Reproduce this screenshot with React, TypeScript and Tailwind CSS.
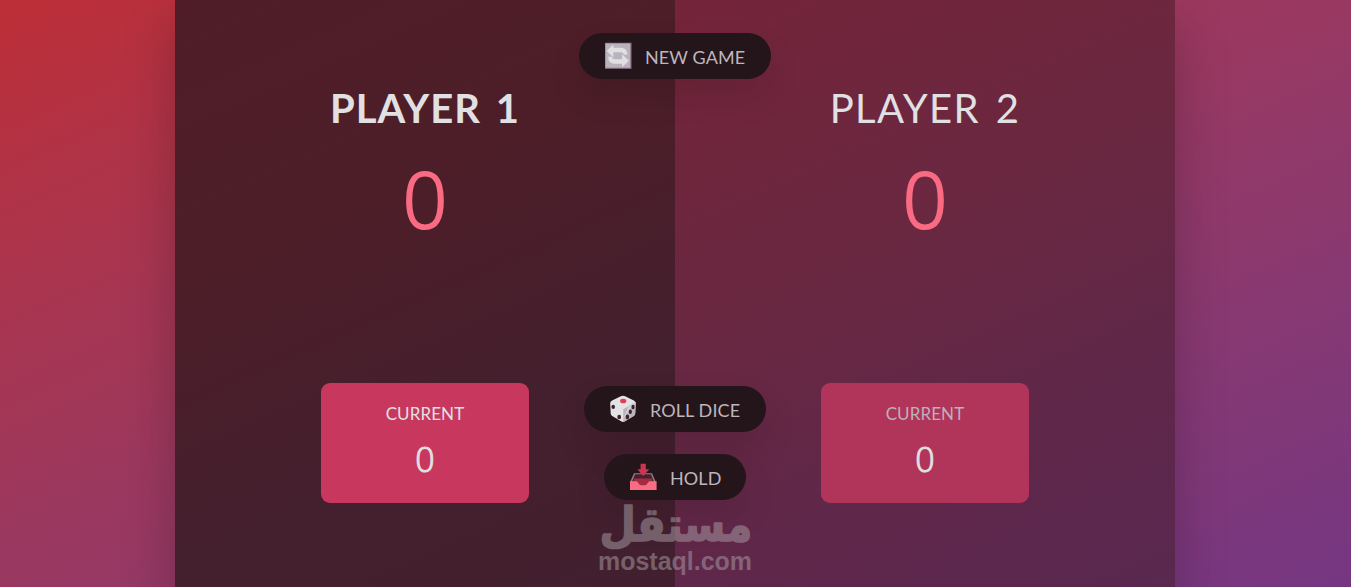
import { ReactNode } from 'react';
import clsx from 'clsx';

function NewGameIcon() {
  return (
    <svg width="28" height="28" viewBox="0 0 28 28" aria-hidden="true">
      <rect x="1" y="0.7" width="26.6" height="26.3" fill="#79616f" />
      <rect x="1.4" y="1.4" width="25" height="24.4" fill="#b9b3bd" />
      <g fill="#e0dfe2">
        <path d="M2.6 9 9.4 2.6v3.2h7.4c3.8 0 6.6 2.6 6.6 6.8h-3.8c0-1.5-1-2.3-2.8-2.3H9.4v5z" />
        <path d="M24.9 18.7 18.1 25.2v-3.4h-7.4c-3.8 0-6.6-2.6-6.6-7H8.2c0 1.7 1 2.4 2.7 2.4h7.2v-5z" />
      </g>
    </svg>
  );
}

function DiceIcon() {
  return (
    <svg width="28" height="28" viewBox="0 0 28 28" aria-hidden="true">
      <path
        d="M11.8 1.2q2.2-1 4.4 0l8.6 4.3q2 1 1.9 3l-.5 10q-.1 1.6-1.5 2.4l-9.2 5.6q-1.5.8-3 0L3.2 21q-1.4-.8-1.5-2.4l-.5-10q-.1-2 1.900-3z"
        fill="#e3e2e4"
      />
      <path
        d="M26.3 7 14.3 14.2v12.9q.7-.1 1.3-.5l9.100-5.6q1.4-.8 1.5-2.400l.5-10q0-.9-.4-1.600z"
        fill="#b9b3bd"
      />
      <path d="M19.5 11.2 26.3 7l.3 1-12.3 15.5z" fill="#d3d0d6" />
      <ellipse cx="14.2" cy="6" rx="3.1" ry="2.3" fill="#df3d58" />
      <g fill="#3c202b">
        <ellipse cx="4.2" cy="11.9" rx="1.8" ry="2.1" />
        <ellipse cx="10.2" cy="22" rx="1.9" ry="2.2" />
        <ellipse cx="24" cy="12" rx="1.6" ry="2.2" />
        <ellipse cx="21.3" cy="16.8" rx="1.6" ry="2.3" />
        <ellipse cx="18.4" cy="22" rx="1.7" ry="2.4" />
      </g>
    </svg>
  );
}

function HoldIcon() {
  return (
    <svg width="28" height="28" viewBox="0 0 28 28" aria-hidden="true">
      <path d="M5 10.3h18l3.6 8.2v8.3H1.3v-8.3z" fill="#91808b" />
      <path d="M6 11.3h16l3 7.4H3z" fill="#4a202c" />
      <path d="M5 15.5h18V19q-3 4.5-6 4.5h-6q-3 0-6-4.5z" fill="#a32c40" />
      <path
        d="M1 18.2h6.2q1 0 1.5 1 1.6 3 4 3h2.6q2.4 0 4-3 .5-1 1.5-1h6.8v8.7H1z"
        fill="#f96c83"
      />
      <path d="M11.6.8h5.2v5.500h3.500L14.200 13 8.400 6.300h3.200z" fill="#cf3450" />
    </svg>
  );
}

interface GameButtonProps {
  icon: ReactNode;
  label: string;
  className: string;
}

function GameButton({ icon, label, className }: GameButtonProps) {
  return (
    <button
      type="button"
      className={clsx(
        'absolute left-1/2 flex h-[46px] -translate-x-1/2 items-center rounded-full bg-[#24151a] pl-[25px] text-[#bcb6be] shadow-[0_17px_35px_rgba(0,0,0,0.1)]',
        className
      )}
    >
      {icon}
      <span className="ml-[13px] pt-[3px] text-[18px] tracking-[0.1px] whitespace-nowrap uppercase">
        {label}
      </span>
    </button>
  );
}

interface PlayerProps {
  name: string;
  score: number;
  current: number;
  active?: boolean;
}

function Player({ name, score, current, active }: PlayerProps) {
  return (
    <section
      className={clsx(
        'flex flex-1 flex-col items-center py-[90px]',
        active
          ? 'bg-[linear-gradient(156deg,#501d27_0%,#4c1e29_40%,#451f2d_65%,#421f2f_100%)]'
          : 'bg-[linear-gradient(156deg,#74243a_0%,#6a2840_40%,#602749_70%,#592850_100%)]'
      )}
    >
      <h2
        className={clsx(
          'h-[55px] text-[40px] leading-[49px] whitespace-nowrap text-[#e1e0e2] uppercase [word-spacing:4px]',
          active
            ? 'font-bold tracking-[1px]'
            : 'font-normal tracking-[1.4px]'
        )}
      >
        {name}
      </h2>
      <p className="mt-[9px] font-['Open_Sans'] text-[78px] leading-[100px] font-light text-[#fa6b83] [-webkit-text-stroke:2.2px_#fa6b83]">
        {score}
      </p>
      <div
        className={clsx(
          'mt-auto flex h-[120px] w-[208px] flex-col items-center rounded-[9px] pt-[18px]',
          active ? 'bg-[#c8375e]' : 'bg-[#b1345b]'
        )}
      >
        <p
          className={clsx(
            'text-[17px] leading-[26px] tracking-[0.1px] uppercase',
            active ? 'text-[#e1e0e2]' : 'text-[#bdb0b9]'
          )}
        >
          Current
        </p>
        <p className="mt-[9px] font-['Open_Sans'] text-[34px] leading-[46px] font-light text-[#e1e0e2] [-webkit-text-stroke:1px_#e1e0e2]">
          {current}
        </p>
      </div>
    </section>
  );
}

function Watermark() {
  return (
    <svg
      className="pointer-events-none absolute top-[486px] left-[410px] overflow-visible"
      width="180"
      height="110"
      viewBox="0 0 180 110"
      fill="#aaa0a8"
      opacity="0.5"
    >
      <text
        x="91"
        y="61"
        textAnchor="middle"
        direction="rtl"
        textLength="153"
        lengthAdjust="spacingAndGlyphs"
        stroke="#aaa0a8"
        strokeWidth="1.6"
        strokeLinejoin="round"
        className="font-['DejaVu_Sans'] text-[47px] font-bold"
      >
        مستقل
      </text>
      <text
        x="13"
        y="90"
        textLength="154"
        lengthAdjust="spacingAndGlyphs"
        className="font-['Liberation_Sans'] text-[25px] font-bold"
      >
        mostaql.com
      </text>
    </svg>
  );
}

export default function App() {
  return (
    <div className="flex h-[587px] items-center justify-center overflow-hidden bg-linear-to-tl from-[#753682] to-[#bd2e36] pr-px font-['Lato',sans-serif]">
      <main className="relative flex h-[599px] w-[1000px] shrink-0 shadow-[0_30px_50px_rgba(0,0,0,0.22)]">
        <Player name="Player 1" score={0} current={0} active />
        <Player name="Player 2" score={0} current={0} />
        <GameButton
          icon={<NewGameIcon />}
          label="New game"
          className="top-[39px] w-[192px]"
        />
        <GameButton
          icon={<DiceIcon />}
          label="Roll dice"
          className="top-[392px] w-[182px]"
        />
        <GameButton
          icon={<HoldIcon />}
          label="Hold"
          className="top-[460px] w-[142px]"
        />
        <Watermark />
      </main>
    </div>
  );
}
